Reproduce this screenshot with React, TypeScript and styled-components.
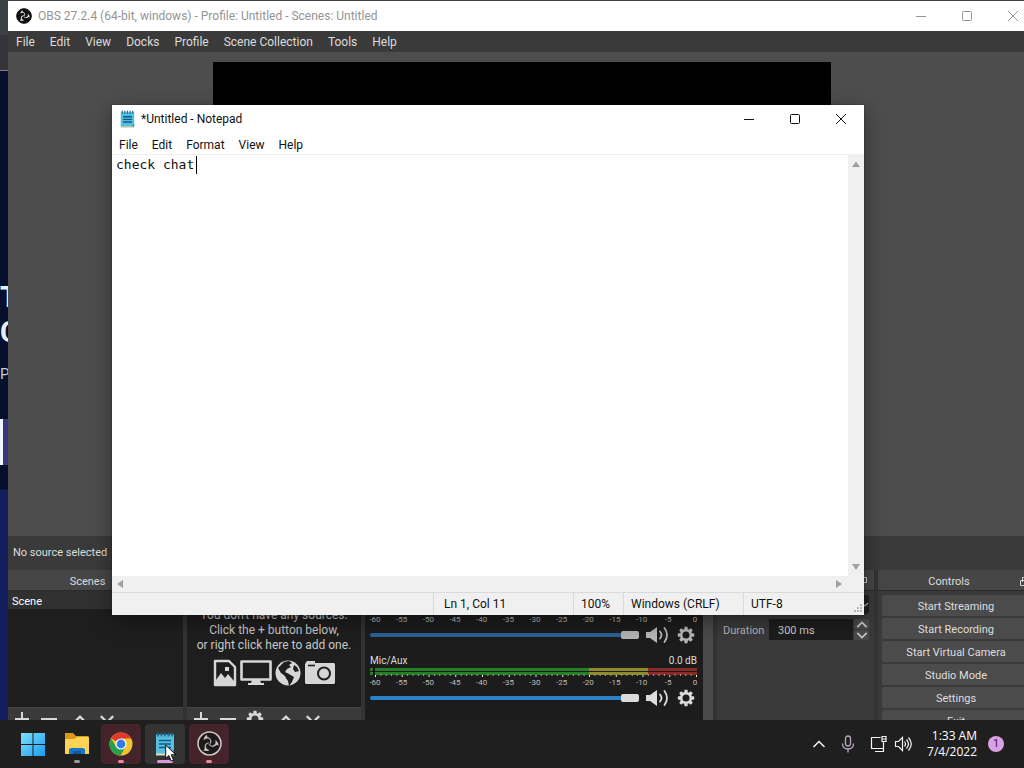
import React from "react";
import styled, { createGlobalStyle } from "styled-components";

const ui = `Roboto, "Open Sans", sans-serif`;

const GlobalStyle = createGlobalStyle`
  * { box-sizing: border-box; }
  body { margin: 0; overflow: hidden; background: #1f1f1f; font-family: ${ui}; }
  button, input, textarea { font: inherit; color: inherit; }
  button { border: 0; padding: 0; background: none; }
  svg { display: block; flex: none; }
`;

const Desktop = styled.div`
  height: 100vh;
  display: grid;
  grid-template-rows: minmax(0, 1fr) 48px;
`;

const Workspace = styled.main`
  position: relative;
  overflow: hidden;
  background: #06102c;
`;

/* Browser window behind everything, only its left edge shows */
const Backdrop = styled.div`
  height: 100%;
  display: flex;
  flex-direction: column;
  color: #e4f0fa;
  overflow: hidden;
`;
const BackTabs = styled.div`height: 35px; background: #3b4243;`;
const BackToolbar = styled.div`height: 36px; background: #35343a; border-bottom: 1px solid #7d7f86;`;
const BackPage = styled.div`
  flex: 1;
  padding-top: 209px;
  background: linear-gradient(#06102c 0 418px, #131f5c 419px);
`;
const BackHeading = styled.div`font: 700 29px/35px ${ui};`;
const BackText = styled.div`margin-top: 14px; font-size: 15px; line-height: 20px; color: #c3cbdc;`;
const BackBox = styled.div`
  width: 240px;
  height: 46px;
  margin-top: 35px;
  background: #35387f;
  border-left: 3px solid #f2f5ff;
`;

const ObsWindow = styled.section`
  position: absolute;
  inset: 1px -12px -24px 8px;
  display: flex;
  flex-direction: column;
  background: #3a3a3a;
  color: #dedede;
  font-size: 11px;
  line-height: 15px;
`;

const TitleBar = styled.header<{ $h: number; $tone: string }>`
  height: ${(p) => p.$h}px;
  display: flex;
  align-items: center;
  gap: 6px;
  padding-left: 8px;
  background: #fff;
  color: ${(p) => p.$tone};
  font-size: 12px;
  flex: none;
`;
const Title = styled.span`flex: 1; white-space: nowrap;`;
const CaptionGroup = styled.div`display: flex; height: 100%;`;
const CaptionButton = styled.button`
  width: 46px;
  height: 100%;
  display: grid;
  place-items: center;
`;

const MenuBar = styled.nav<{ $dark?: boolean }>`
  height: 21px;
  flex: none;
  display: flex;
  align-items: center;
  gap: ${(p) => (p.$dark ? 1 : 0)}px;
  padding-left: ${(p) => (p.$dark ? 1 : 0)}px;
  padding-top: ${(p) => (p.$dark ? 0 : 2)}px;
  background: ${(p) => (p.$dark ? "#3a3a3a" : "#fff")};
  color: ${(p) => (p.$dark ? "#dcdcdc" : "#111")};
  font-size: 12px;
  line-height: 16px;
`;
const MenuItem = styled.button`padding: 0 7px; white-space: nowrap;`;

const Stage = styled.div`
  flex: 1;
  min-height: 0;
  padding: 10px;
  display: flex;
  justify-content: center;
  background: #4d4d4d;
`;
const Preview = styled.div`height: 100%; aspect-ratio: 4 / 3; background: #000;`;

const SourceBar = styled.div`
  height: 34px;
  flex: none;
  padding: 0 5px;
  line-height: 34px;
  background: #3a3a3a;
`;

const Docks = styled.div`
  height: 174px;
  flex: none;
  display: grid;
  grid-template-columns: 175px 174px 348px 157px minmax(0, 1fr);
  column-gap: 4px;
  background: #333;
`;
const Dock = styled.section`display: flex; flex-direction: column; min-width: 0; background: #3a3a3a;`;
const DockHeader = styled.header`
  height: 21px;
  flex: none;
  display: flex;
  align-items: center;
  padding: 2px 7px 0 0;
  background: #464646;
  border-bottom: 1px solid #2a2a2a;
`;
const DockTitle = styled.span`flex: 1; text-align: center;`;
const DockBody = styled.div`
  height: 116px;
  flex: none;
  display: flex;
  flex-direction: column;
  background: #1e1e1e;
`;
const SceneRow = styled.button`
  height: 18px;
  padding: 2px 0 0 4px;
  text-align: left;
  background: #303030;
  color: #fff;
`;
const EmptyHint = styled.div`
  flex: 1;
  display: flex;
  flex-direction: column;
  align-items: center;
  justify-content: center;
  padding-bottom: 4px;
  color: #c8c8c8;
  font-size: 12px;
  text-align: center;
  white-space: nowrap;
`;
const HintIcons = styled.div`display: flex; gap: 3px; margin-top: 6px;`;
const DockTools = styled.div`
  flex: 1;
  padding: 1px 4px;
  display: flex;
  gap: 7px;
  color: #d8d8d8;
  background: #3a3a3a;
  border-top: 1px solid #444;
`;
const ToolButton = styled.button<{ $apart?: boolean }>`
  width: 20px;
  height: 20px;
  margin-left: ${(p) => (p.$apart ? 4 : 0)}px;
  display: grid;
  place-items: center;
`;

const Mixer = styled.div`
  flex: 1;
  display: grid;
  grid-template-columns: minmax(0, 1fr) 10px;
  background: #1c1c1c;
`;
const Strips = styled.div`
  padding: 0 6px 0 5px;
  display: flex;
  flex-direction: column;
  gap: 6px;
`;
const MixerScroll = styled.div`background: #4a4a4a;`;
const Strip = styled.div`display: flex; flex-direction: column; height: 57px;`;
const StripHead = styled.div`
  height: 14px;
  display: flex;
  justify-content: space-between;
  font-size: 10px;
  line-height: 14px;
  color: #dcdcdc;
`;
const Scale = styled.div`
  height: 9px;
  padding: 0 2px 0 5px;
  display: flex;
  justify-content: space-between;
  font-size: 8px;
  line-height: 11px;
  color: #bdbdbd;
`;
const Mark = styled.span`width: 0; display: flex; justify-content: center;`;
const StripControls = styled.div`display: flex; align-items: center; gap: 6px; margin-top: 3px; height: 18px;`;
const Slider = styled.input<{ $dim?: boolean }>`
  appearance: none;
  flex: 1;
  min-width: 0;
  height: 10px;
  margin: 0;
  background: none;
  &::-webkit-slider-runnable-track {
    height: 4px;
    border-radius: 2px;
    background: ${(p) => (p.$dim ? "#2a6295" : "#2a82c8")};
  }
  &::-webkit-slider-thumb {
    appearance: none;
    width: 18px;
    height: 8px;
    margin-top: -2px;
    border-radius: 2px;
    background: ${(p) => (p.$dim ? "#b4b4b4" : "#dcdcdc")};
  }
`;
const IconButton = styled.button<{ $w: number; $dim?: boolean }>`
  width: ${(p) => p.$w}px;
  display: grid;
  place-items: center;
  color: ${(p) => (p.$dim ? "#b8b8b8" : "#dcdcdc")};
`;

const TransitionForm = styled.div`
  padding: 4px 5px 0 6px;
  display: flex;
  flex-direction: column;
  gap: 5px;
  color: #b4b4b4;
`;
const Combo = styled.button`
  height: 19px;
  display: flex;
  align-items: center;
  justify-content: flex-end;
  border-radius: 4px;
  background: #1f1f1f;
`;
const Duration = styled.div`height: 21px; display: flex; align-items: center; gap: 5px;`;
const DurationLabel = styled.label`width: 41px; padding-top: 2px;`;
const DurationInput = styled.input`
  flex: 1;
  min-width: 0;
  height: 21px;
  padding: 2px 9px 0;
  border: 0;
  background: #1d1d1d;
  color: #d0d0d0;
`;
const Spinner = styled.div`display: flex; flex-direction: column; gap: 1px; margin-left: -4px;`;
const SpinButton = styled.button`
  width: 15px;
  height: 10px;
  display: grid;
  place-items: center;
  border-radius: 2px;
  background: #4a4a4a;
  color: #c8c8c8;
`;

const ControlList = styled.div`
  padding: 4px 6px 0 4px;
  display: flex;
  flex-direction: column;
  gap: 2px;
`;
const ControlButton = styled.button`
  height: 21px;
  padding-top: 2px;
  border-radius: 2px;
  background: #4b4b4b;
  color: #dedede;
`;

const NotepadWindow = styled.section`
  position: absolute;
  inset: 105px 160px 105px 112px;
  display: flex;
  flex-direction: column;
  background: #fff;
  color: #111;
  box-shadow: 0 6px 20px rgba(0, 0, 0, 0.4), 0 0 1px #222;
`;
const EditorRow = styled.div`
  flex: 1;
  min-height: 0;
  position: relative;
  display: grid;
  grid-template-columns: minmax(0, 1fr) 16px;
  border-top: 1px solid #f0f0f0;
`;
const Editor = styled.textarea`
  width: 100%;
  height: 100%;
  padding: 1px 4px;
  border: 0;
  outline: 0;
  resize: none;
  overflow: hidden;
  background: #fff;
  font: 13px/18px "DejaVu Sans Mono", monospace;
`;
const Caret = styled.span`
  position: absolute;
  top: 1px;
  left: 84px;
  width: 1px;
  height: 18px;
  background: #000;
`;
const VScroll = styled.div`
  display: flex;
  flex-direction: column;
  align-items: center;
  justify-content: space-between;
  padding: 5px 0;
  background: #f0f0f0;
  color: #a0a0a0;
`;
const HScroll = styled.div`
  height: 16px;
  flex: none;
  display: flex;
  align-items: center;
  justify-content: space-between;
  padding: 0 21px 0 4px;
  background: #f0f0f0;
  color: #a0a0a0;
`;
const StatusBar = styled.footer`
  height: 23px;
  flex: none;
  display: grid;
  grid-template-columns: minmax(0, 1fr) 140px 50px 120px 121px;
  background: #f0f0f0;
  border-top: 1px solid #dadada;
  font-size: 12px;
  line-height: 22px;
`;
const StatusCell = styled.span<{ $pad?: number }>`
  padding-left: ${(p) => p.$pad ?? 7}px;
  border-left: 1px solid #dadada;
  white-space: nowrap;
  display: flex;
  justify-content: space-between;
  align-items: flex-end;
  &:first-child { border: 0; }
`;

const Taskbar = styled.footer`
  display: flex;
  justify-content: space-between;
  align-items: center;
  padding: 0 20px 0 13px;
  background: #1f1f1f;
  color: #fff;
  z-index: 1;
`;
const Apps = styled.div`display: flex; gap: 4px;`;
const AppButton = styled.button<{ $bg?: string }>`
  width: 40px;
  height: 40px;
  display: flex;
  flex-direction: column;
  align-items: center;
  justify-content: space-between;
  padding: 7px 0 1px;
  border-radius: 4px;
  background: ${(p) => p.$bg ?? "none"};
`;
const Indicator = styled.span<{ $w: number; $c: string }>`
  width: ${(p) => p.$w}px;
  height: 3px;
  border-radius: 2px;
  background: ${(p) => p.$c};
`;
const Pointer = styled.svg`position: absolute; left: 165px; bottom: 6px; z-index: 2;`;
const Tray = styled.div`display: flex; align-items: center; gap: 11px;`;
const TrayButton = styled.button<{ $w: number }>`width: ${(p) => p.$w}px; display: grid; place-items: center;`;
const Clock = styled.time`font: 12px/16px "Open Sans", sans-serif; text-align: right; width: 54px; white-space: nowrap;`;
const Badge = styled.span`
  width: 16px;
  height: 16px;
  border-radius: 8px;
  background: #d9a0e6;
  color: #3a2340;
  font-size: 11px;
  line-height: 16px;
  text-align: center;
`;

const ObsLogo = ({ size, ring, fill, blade }: { size: number; ring: string; fill: string; blade: string }) => (
  <svg width={size} height={size} viewBox="0 0 24 24">
    <circle cx="12" cy="12" r="11" fill={fill} stroke={ring} strokeWidth="1.5" />
    {[0, 120, 240].map((a) => (
      <path
        key={a}
        transform={`rotate(${a} 12 12)`}
        d="M12.400 12.200Q13.600 8.400 10.800 7.300 8.300 6.600 6.400 8.800 6.600 4.900 9.700 3.400 8.800 5.300 11.300 6.200 15.200 8.200 13 12.400z"
        fill={blade}
      />
    ))}
  </svg>
);

const Caption = ({ kind }: { kind: "min" | "max" | "close" }) => (
  <svg width="12" height="12" viewBox="0 0 12 12" fill="none" stroke="currentColor">
    {kind === "min" && <path d="M1 6.500h10" />}
    {kind === "max" && <rect x="1.500" y="1.500" width="9" height="9" rx="1" />}
    {kind === "close" && <path d="M1 1l10 10M11 1L1 11" />}
  </svg>
);

const Captions = () => (
  <CaptionGroup>
    <CaptionButton aria-label="Minimize"><Caption kind="min" /></CaptionButton>
    <CaptionButton aria-label="Maximize"><Caption kind="max" /></CaptionButton>
    <CaptionButton aria-label="Close"><Caption kind="close" /></CaptionButton>
  </CaptionGroup>
);

const NotepadIcon = ({ w, h }: { w: number; h: number }) => (
  <svg width={w} height={h} viewBox="0 0 20 24">
    <rect x="1" y="20" width="18" height="4" fill="#e6dcc0" />
    <path d="M1 3h18v15l-4 4H1z" fill="#56bfe0" />
    <path d="M19 18v4h-4z" fill="#2f87ad" />
    <path d="M3 1v4M6.500 1v4M10 1v4M13.500 1v4M17 1v4" stroke="#17698f" strokeWidth="1.600" />
    <path d="M4 9h12M4 12.500h12M4 16h12" stroke="#0f5c86" strokeWidth="1.700" />
  </svg>
);

const gearTeeth = [0, 45, 90, 135, 180, 225, 270, 315];
const Gear = () => (
  <svg width="18" height="18" viewBox="0 0 18 18">
    <circle cx="9" cy="9" r="4.800" fill="none" stroke="currentColor" strokeWidth="2.500" />
    {gearTeeth.map((a) => (
      <path key={a} d="M7.600 .8h2.800l.5 3h-3.800z" fill="currentColor" transform={`rotate(${a} 9 9)`} />
    ))}
  </svg>
);

const Speaker = () => (
  <svg width="24" height="18" viewBox="0 0 24 18" fill="none" stroke="currentColor" strokeWidth="1.800" strokeLinecap="round">
    <path d="M1 6h4l7-5v16l-7-5H1z" fill="currentColor" stroke="none" />
    <path d="M15 5.500q3 3.500 0 7M19.500 2q5 7 0 14" />
  </svg>
);

const Chevron = ({ up, w = 14, sw = 2 }: { up?: boolean; w?: number; sw?: number }) => (
  <svg width={w} height={w / 2 + 1} viewBox="0 0 14 8" fill="none" stroke="currentColor" strokeWidth={sw}>
    <path d={up ? "M1.500 7L7 1.500 12.500 7" : "M1.500 1L7 6.500 12.500 1"} />
  </svg>
);

const Plus = () => (
  <svg width="16" height="16" viewBox="0 0 16 16" stroke="currentColor" strokeWidth="2"><path d="M8 1v14M1 8h14" /></svg>
);
const Minus = () => (
  <svg width="16" height="16" viewBox="0 0 16 16" stroke="currentColor" strokeWidth="2"><path d="M0 8h16" /></svg>
);
const FloatIcon = () => (
  <svg width="9" height="9" viewBox="0 0 9 9" fill="none" stroke="#d0d0d0"><path d="M2.500 5V.5h6v5H6M.5 3.500h5v5h-5z" /></svg>
);

const Arrow = ({ d }: { d: string }) => (
  <svg width="8" height="8" viewBox="0 0 8 8" fill="currentColor"><path d={d} /></svg>
);

const Meter = ({ dim }: { dim?: boolean }) => (
  <svg width="100%" height="9" viewBox="0 0 327 9" preserveAspectRatio="none" opacity={dim ? 0.7 : 1}>
    {[0, 4].map((y) => (
      <g key={y}>
        <rect x="0" y={y} width="219" height="3" fill="#267f26" />
        <rect x="219" y={y} width="59" height="3" fill="#8f8a2d" />
        <rect x="278" y={y} width="49" height="3" fill="#8c2a25" />
      </g>
    ))}
    <rect x="3" y="0" width="2" height="7" fill="#111" />
    {Array.from({ length: 61 }, (_, i) => (
      <rect key={i} x={5 + i * 5.35} y={i % 5 ? 6 : 7} width="1" height="2" fill={i % 5 ? "#9a9a9a" : "#e8e8e8"} />
    ))}
  </svg>
);

const marks = ["-60", "-55", "-50", "-45", "-40", "-35", "-30", "-25", "-20", "-15", "-10", "-5", "0"];

const MixerStrip = ({ name, level, dim }: { name: string; level: string; dim?: boolean }) => (
  <Strip>
    <StripHead><span>{name}</span><span>{level}</span></StripHead>
    <Meter dim={dim} />
    <Scale>{marks.map((m) => <Mark key={m}>{m}</Mark>)}</Scale>
    <StripControls>
      <Slider type="range" min="0" max="100" defaultValue="100" $dim={dim} aria-label="Volume" />
      <IconButton $w={24} $dim={dim} aria-label="Mute"><Speaker /></IconButton>
      <IconButton $w={22} $dim={dim} aria-label="Audio options"><Gear /></IconButton>
    </StripControls>
  </Strip>
);

const Tools = ({ gear }: { gear?: boolean }) => (
  <DockTools>
    <ToolButton aria-label="Add"><Plus /></ToolButton>
    <ToolButton aria-label="Remove"><Minus /></ToolButton>
    {gear && <ToolButton aria-label="Properties"><Gear /></ToolButton>}
    <ToolButton $apart aria-label="Move up"><Chevron up w={16} /></ToolButton>
    <ToolButton aria-label="Move down"><Chevron w={16} /></ToolButton>
  </DockTools>
);

const Obs = () => (
  <ObsWindow>
    <TitleBar $h={30} $tone="#949494">
      <ObsLogo size={16} ring="#111" fill="#111" blade="#eee" />
      <Title>OBS 27.2.4 (64-bit, windows) - Profile: Untitled - Scenes: Untitled</Title>
      <Captions />
    </TitleBar>
    <MenuBar $dark>
      {["File", "Edit", "View", "Docks", "Profile", "Scene Collection", "Tools", "Help"].map((m) => (
        <MenuItem key={m}>{m}</MenuItem>
      ))}
    </MenuBar>
    <Stage><Preview /></Stage>
    <SourceBar>No source selected</SourceBar>
    <Docks>
      <Dock>
        <DockHeader><DockTitle>Scenes</DockTitle><FloatIcon /></DockHeader>
        <DockBody><SceneRow>Scene</SceneRow></DockBody>
        <Tools />
      </Dock>
      <Dock>
        <DockHeader />
        <DockBody>
          <EmptyHint>
            <span>You don't have any sources.</span>
            <span>Click the + button below,</span>
            <span>or right click here to add one.</span>
            <HintIcons>
              <svg width="24" height="28" viewBox="0 0 24 28">
                <path d="M2 2h14l6 6v18H2z" fill="none" stroke="#d6d6d6" strokeWidth="2.400" strokeLinejoin="round" />
                <path d="M3 25v-4l5-7 4 5 3-4 6 7v3z" fill="#d6d6d6" />
                <rect x="12" y="8" width="4" height="4" fill="#d6d6d6" />
              </svg>
              <svg width="32" height="28" viewBox="0 0 32 28">
                <path d="M1.500 2.500h29v18h-29z" fill="none" stroke="#d6d6d6" strokeWidth="2.600" strokeLinejoin="round" />
                <path d="M12 21h8l1 3h3v2H8v-2h3z" fill="#d6d6d6" />
              </svg>
              <svg width="26" height="28" viewBox="0 0 26 28">
                <circle cx="13" cy="14" r="12.500" fill="#d6d6d6" />
                <path d="M9 3l5-1 3 2-3 2 2 2-4 2-2 3 4 2 5 3-2 5-3 4-1-5-3-4-5-4-2-5 3-3z" fill="#1e1e1e" />
                <path d="M3 9l3 5 4 3 1 3 1 5-5-2-5-7z" fill="#d6d6d6" />
                <path d="M19 6l3 2 2 4-4 1-2-3z" fill="#1e1e1e" />
              </svg>
              <svg width="32" height="28" viewBox="0 0 32 28">
                <path d="M3 2h8v2h19l1 1v19l-1 1H2l-1-1V5z" fill="#d6d6d6" />
                <path d="M4 6.500h7" stroke="#1e1e1e" strokeWidth="1.600" />
                <circle cx="20" cy="14.500" r="6" fill="none" stroke="#1e1e1e" strokeWidth="2" />
              </svg>
            </HintIcons>
          </EmptyHint>
        </DockBody>
        <Tools gear />
      </Dock>
      <Dock>
        <DockHeader />
        <Mixer>
          <Strips>
            <MixerStrip name="" level="" dim />
            <MixerStrip name="Mic/Aux" level="0.0 dB" />
          </Strips>
          <MixerScroll />
        </Mixer>
      </Dock>
      <Dock>
        <DockHeader><DockTitle /><FloatIcon /></DockHeader>
        <TransitionForm>
          <Combo aria-label="Transition"><Chevron w={8} /></Combo>
          <Duration>
            <DurationLabel htmlFor="duration">Duration</DurationLabel>
            <DurationInput id="duration" defaultValue="300 ms" />
            <Spinner>
              <SpinButton aria-label="Increase"><Chevron up w={12} /></SpinButton>
              <SpinButton aria-label="Decrease"><Chevron w={12} /></SpinButton>
            </Spinner>
          </Duration>
        </TransitionForm>
      </Dock>
      <Dock>
        <DockHeader><DockTitle>Controls</DockTitle><FloatIcon /></DockHeader>
        <ControlList>
          {["Start Streaming", "Start Recording", "Start Virtual Camera", "Studio Mode", "Settings", "Exit"].map((c) => (
            <ControlButton key={c}>{c}</ControlButton>
          ))}
        </ControlList>
      </Dock>
    </Docks>
  </ObsWindow>
);

const Notepad = () => (
  <NotepadWindow>
    <TitleBar $h={28} $tone="#111">
      <NotepadIcon w={15} h={18} />
      <Title>*Untitled - Notepad</Title>
      <Captions />
    </TitleBar>
    <MenuBar>
      {["File", "Edit", "Format", "View", "Help"].map((m) => (
        <MenuItem key={m}>{m}</MenuItem>
      ))}
    </MenuBar>
    <EditorRow>
      <Editor aria-label="Text editor" spellCheck={false} defaultValue="check chat" />
      <Caret />
      <VScroll>
        <Arrow d="M4 1.500L8 7H0z" />
        <Arrow d="M0 1h8L4 7z" />
      </VScroll>
    </EditorRow>
    <HScroll>
      <Arrow d="M7 0v8L1 4z" />
      <Arrow d="M1 0v8l6-4z" />
    </HScroll>
    <StatusBar>
      <StatusCell />
      <StatusCell $pad={10}>Ln 1, Col 11</StatusCell>
      <StatusCell>100%</StatusCell>
      <StatusCell>Windows (CRLF)</StatusCell>
      <StatusCell>
        UTF-8
        <svg width="12" height="12" viewBox="0 0 12 12" fill="#b4b4b4">
          <path d="M8 1h2v2H8zM5 4h2v2H5zM8 4h2v2H8zM2 7h2v2H2zM5 7h2v2H5zM8 7h2v2H8z" />
        </svg>
      </StatusCell>
    </StatusBar>
  </NotepadWindow>
);

export default function App() {
  return (
    <>
      <GlobalStyle />
      <Desktop>
        <Workspace>
          <Backdrop>
            <BackTabs />
            <BackToolbar />
            <BackPage>
              <BackHeading>T</BackHeading>
              <BackHeading>C</BackHeading>
              <BackText>P</BackText>
              <BackBox />
            </BackPage>
          </Backdrop>
          <Obs />
          <Notepad />
        </Workspace>
        <Taskbar>
          <Apps>
            <AppButton aria-label="Start">
              <svg width="24" height="26" viewBox="0 0 24 26">
                <defs>
                  <linearGradient id="win" x1="0" y1="0" x2="1" y2="1">
                    <stop offset="0" stopColor="#7fe0fb" />
                    <stop offset="1" stopColor="#1a9cf0" />
                  </linearGradient>
                </defs>
                <path d="M0 2h11.500v11H0zM12.500 2H24v11H12.500zM0 14h11.500v11H0zM12.500 14H24v11H12.500z" fill="url(#win)" />
              </svg>
            </AppButton>
            <AppButton aria-label="File Explorer">
              <svg width="26" height="26" viewBox="0 0 26 26">
                <path d="M1 2h8l3 3h12l1 1v6H1z" fill="#d99a1c" />
                <path d="M1 8h9l3-2h11l1 1v16H1z" fill="#fcd354" />
                <path d="M5 23v-5l2-1h12l2 1v5z" fill="#1876c4" />
                <path d="M9 20h8v3H9z" fill="#0f5a9c" />
              </svg>
              <Indicator $w={6} $c="#9a9a9a" />
            </AppButton>
            <AppButton $bg="#44242a" aria-label="Chrome">
              <svg width="24" height="26" viewBox="0 0 24 26">
                <circle cx="12" cy="13" r="11.500" fill="#f2c42c" />
                <path d="M12 13L2 7.300A11.500 11.500 0 0 1 22.200 7.500H12z" fill="#e0392d" />
                <path d="M2 7.300A11.500 11.500 0 0 0 11.500 24.500L16.500 16 12 13 7 15.500z" fill="#27a04c" />
                <circle cx="12" cy="13" r="5.600" fill="#fff" />
                <circle cx="12" cy="13" r="4.400" fill="#2f7be8" />
              </svg>
              <Indicator $w={6} $c="#f08a96" />
            </AppButton>
            <AppButton $bg="#333" aria-label="Notepad">
              <NotepadIcon w={20} h={25} />
              <Indicator $w={16} $c="#d79bd8" />
            </AppButton>
            <AppButton $bg="#44242a" aria-label="OBS Studio">
              <ObsLogo size={25} ring="#d0c8c8" fill="#1c1a1b" blade="#c8c0c0" />
              <Indicator $w={6} $c="#f08a96" />
            </AppButton>
          </Apps>
          <Tray>
            <TrayButton $w={14} aria-label="Show hidden icons"><Chevron up w={14} sw={1.4} /></TrayButton>
            <TrayButton $w={22} aria-label="Microphone">
              <svg width="14" height="18" viewBox="0 0 14 18" fill="none" stroke="#b9a9bd" strokeWidth="1.300">
                <rect x="4.500" y="1" width="5" height="10" rx="2.500" />
                <path d="M1.500 8.500q0 5.500 5.500 5.500t5.500-5.500M7 14v3.500" />
              </svg>
            </TrayButton>
            <TrayButton $w={42} aria-label="Network and volume">
              <svg width="42" height="18" viewBox="0 0 42 18" fill="none" stroke="#f4f4f4" strokeWidth="1.200">
                <path d="M10.500 2.500H1.500v11H13M5 16.500h9M13.500 7v9.500M12 1.500h4v5h-4zM12 4h4" />
                <path d="M25.500 6.500h3l4-4v13l-4-4h-3zM34.500 6.500q2 2.500 0 5M36.500 4.500q4 4.500 0 9M38.500 2.500q5.500 6.500 0 13" />
              </svg>
            </TrayButton>
            <Clock>1:33 AM<br />7/4/2022</Clock>
            <Badge>1</Badge>
          </Tray>
        </Taskbar>
      </Desktop>
      <Pointer width="12" height="18" viewBox="0 0 12 18">
        <path d="M.7 1v13.500l3.200-3 2.200 5.500 2.400-1-2.300-5.300h4.500z" fill="#fff" stroke="#111" />
      </Pointer>
    </>
  );
}
